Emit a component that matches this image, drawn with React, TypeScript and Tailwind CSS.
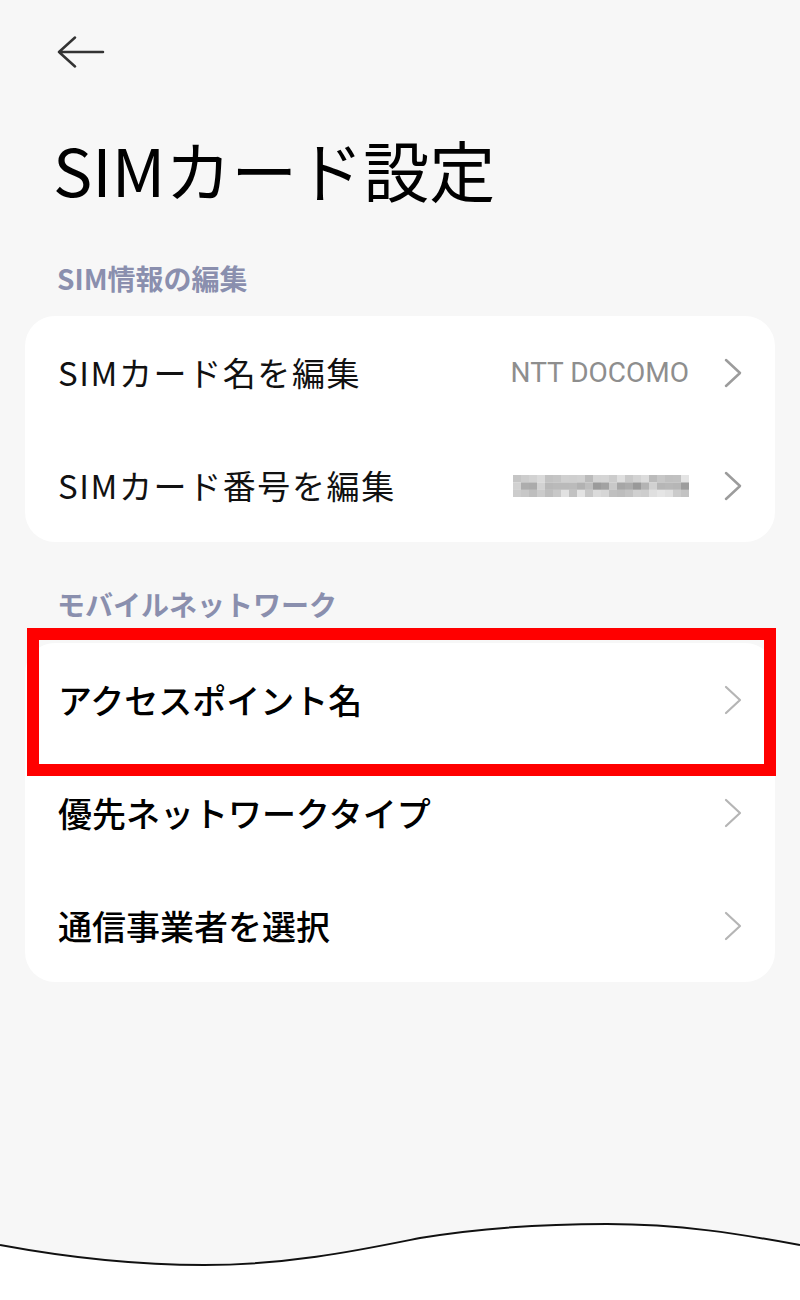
import { ReactNode } from "react";

const jp = "font-['Noto_Sans_CJK_JP',sans-serif]";

function Chevron({ light }: { light?: boolean }) {
  return (
    <svg width="18" height="30" viewBox="0 0 18 30" fill="none" className="shrink-0">
      <polyline
        points="2,2 16,15 2,28"
        stroke={light ? "#b5b5b5" : "#9c9c9c"}
        strokeWidth={light ? 2.2 : 2.5}
        strokeLinecap="round"
        strokeLinejoin="round"
      />
    </svg>
  );
}

// pixelated (mosaic) phone number
function Mosaic() {
  const cols = 22;
  const rows = 3;
  const cells = [];
  for (let r = 0; r < rows; r++) {
    for (let c = 0; c < cols; c++) {
      const h = Math.abs(Math.sin((c + 1) * 12.9898 + (r + 1) * 78.233) * 43758.5453) % 1;
      const base = r === 1 ? 182 : 208;
      const v = Math.round(base + (h - 0.5) * (r === 1 ? 64 : 44));
      cells.push(
        <rect key={`${r}-${c}`} x={c * 8} y={r * 7.4} width="8" height="7.5" fill={`rgb(${v},${v},${v})`} />,
      );
    }
  }
  return (
    <svg width="176" height="22" viewBox="0 0 176 22" className="shrink-0">
      {cells}
    </svg>
  );
}

function Row({ label, value, light, upper }: { label: string; value?: ReactNode; light?: boolean; upper?: boolean }) {
  return (
    <div className="h-[113px] flex items-center pl-[33px] pr-[33px]">
      <span
        className={
          upper
            ? `${jp} flex-1 text-[33px] leading-none tracking-[1.6px] text-[#111]`
            : `${jp} flex-1 text-[34px] leading-none font-medium text-black`
        }>
        {label}
      </span>
      {value && <div className="mr-[35px] flex items-center">{value}</div>}
      <Chevron light={light} />
    </div>
  );
}

export default function App() {
  return (
    <div className="relative w-[800px] h-[1300px] bg-[#f7f7f7] flex flex-col overflow-hidden">
      <div className="h-[104px] flex items-center pl-[57px]">
        <svg width="48" height="32" viewBox="0 0 48 32" fill="none">
          <path d="M2 16H46M18 1.5L2 16L18 30.5" stroke="#333" strokeWidth="2.5" strokeLinecap="round" strokeLinejoin="round" />
        </svg>
      </div>

      <div className="h-[128px] flex items-center pl-[53px]">
        <h1 className={`${jp} text-[66px] leading-none font-normal text-black`}>SIMカード設定</h1>
      </div>

      <div className="pt-[32px] pb-[24px] pl-[57px]">
        <h2 className={`${jp} text-[28px] leading-[28px] font-bold text-[#8a8fae]`}>SIM情報の編集</h2>
      </div>

      <div className="mx-[25px] bg-white rounded-[30px]">
        <Row
          upper
          label="SIMカード名を編集"
          value={<span className="font-['Roboto',sans-serif] text-[28px] leading-none text-[#8e8e8e]">NTT DOCOMO</span>}
        />
        <Row upper label="SIMカード番号を編集" value={<Mosaic />} />
      </div>

      <div className="pt-[48px] pb-[25px] pl-[57px]">
        <h2 className={`${jp} text-[28px] leading-[28px] font-bold text-[#8a8fae]`}>モバイルネットワーク</h2>
      </div>

      <div className="relative mx-[25px] bg-white rounded-[30px]">
        <Row light label="アクセスポイント名" />
        <Row light label="優先ネットワークタイプ" />
        <Row light label="通信事業者を選択" />
        <div className="absolute top-[-15px] left-[2px] w-[749px] h-[148px] border-[12px] border-[#ff0000]" />
      </div>

      <div className="flex-1" />

      <svg width="800" height="80" viewBox="0 0 800 80" className="block shrink-0">
        <path
          d="M0 25C70 38 140 45 204 45C290 45 360 30 420 18C480 8 540 4 607 4C680 4 740 14 800 25L800 80L0 80Z"
          fill="#fff"
        />
        <path
          d="M0 25C70 38 140 45 204 45C290 45 360 30 420 18C480 8 540 4 607 4C680 4 740 14 800 25"
          fill="none"
          stroke="#111"
          strokeWidth="2"
        />
      </svg>
    </div>
  );
}
